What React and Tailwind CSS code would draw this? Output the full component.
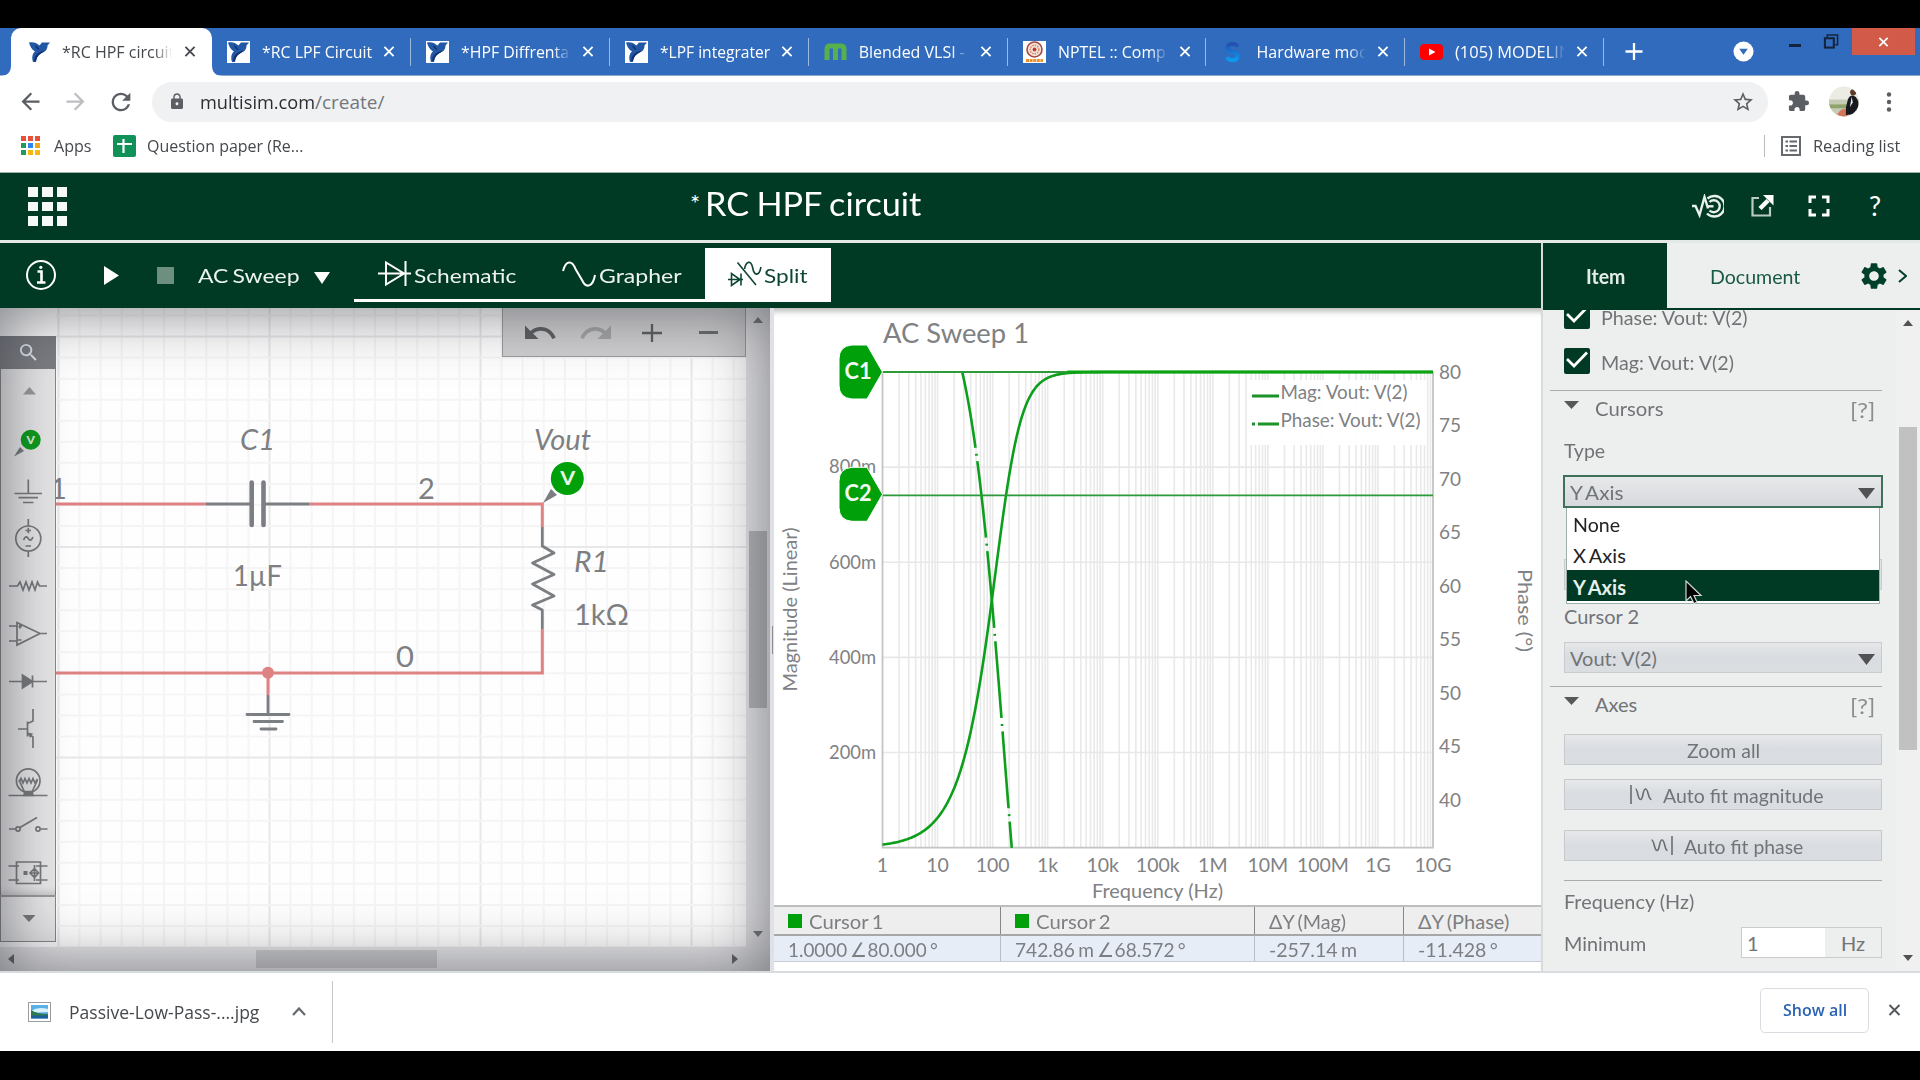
import React, { useLayoutEffect, useRef, useState } from "react";
import {
  MdArrowBack,
  MdArrowForward,
  MdRefresh,
  MdLock,
  MdStarBorder,
  MdExtension,
  MdSearch,
  MdSettings,
  MdUndo,
  MdRedo,
  MdFullscreen,
} from "react-icons/md";

/* Single line of text stretched or squeezed to a given width. */
function Fit({ w, children, className = "" }) {
  const ref = useRef(null);
  const [scale, setScale] = useState(1);
  useLayoutEffect(() => {
    if (ref.current.offsetWidth) setScale(w / ref.current.offsetWidth);
  }, [w]);
  return (
    <span className={"inline-block shrink-0 whitespace-nowrap " + className} style={{ width: w }}>
      <span ref={ref} className="inline-block origin-left" style={{ transform: `scaleX(${scale})` }}>
        {children}
      </span>
    </span>
  );
}

/* ---------- Browser chrome ---------- */

function NiBird({ boxed }) {
  return (
    <svg viewBox="0 0 23 22" className={boxed ? "h-[22px] w-[23px] bg-white" : "h-[22px] w-[23px]"}>
      <path d="M1 1.500 C5 .5 8.500 1.500 11.500 4.500 L14 1.500 H22 L19.500 4.500 C19.500 8.500 17.500 11 13 12 C9.500 13 9 17 8 21 H5 C3.500 16 4.500 12.500 7 10.500 C3.500 8.500 1.800 5 1 1.500 Z" fill="#2257a5" />
      <path d="M6 20 C6.500 14 10 11 16.500 9.500 C14 13 9.500 13 7.800 20 Z M7 4 C9 5 11 7 11.500 9 C9 8.500 7.500 6.500 7 4 Z" fill="#10316e" />
    </svg>
  );
}

function Favicon({ kind }) {
  if (kind === "ni") return <NiBird />;
  if (kind === "nibox") return <NiBird boxed />;
  if (kind === "m")
    return (
      <svg viewBox="0 0 23 22" className="h-[22px] w-[23px]">
        <path d="M3 19 V8 Q3 5 6 5 H17 Q20 5 20 8 V19 M11.500 5 V19" fill="none" stroke="#56b14c" strokeWidth="5" />
      </svg>
    );
  if (kind === "nptel")
    return (
      <svg viewBox="0 0 23 22" className="h-[22px] w-[23px] bg-white">
        <circle cx="11.500" cy="8.500" r="7.500" fill="#f3e3dc" stroke="#a7493a" strokeWidth="1.600" />
        <circle cx="11.500" cy="8.500" r="4.300" fill="none" stroke="#d58a6a" strokeWidth="1.500" strokeDasharray="1.500 1" />
        <circle cx="11.500" cy="8.500" r="1.900" fill="#c0392b" />
        <path d="M3 19.500 H20" stroke="#f0902b" strokeWidth="3" strokeDasharray="3 .6" />
      </svg>
    );
  if (kind === "s")
    return (
      <svg viewBox="0 0 23 22" className="h-[22px] w-[23px]">
        <defs>
          <linearGradient id="sg" x1="0" y1="0" x2="0" y2="1">
            <stop offset="0" stopColor="#2350b0" />
            <stop offset="1" stopColor="#0a9bf0" />
          </linearGradient>
        </defs>
        <path d="M16.500 6 Q15 3 11.500 3 Q6.500 3.300 6.500 7 Q6.800 10 11.500 11 Q16.800 12 16.500 15 Q16 19 11.500 19 Q7.500 19 6 16" fill="none" stroke="url(#sg)" strokeWidth="4.200" />
      </svg>
    );
  return (
    <svg viewBox="0 0 23 22" className="h-[22px] w-[23px]">
      <rect x="0" y="3" width="23" height="16" rx="4" fill="#f00" />
      <path d="M9 7.500 L15.500 11 L9 14.500 Z" fill="#fff" />
    </svg>
  );
}

function Cross({ className }) {
  return (
    <svg viewBox="0 0 12 12" className={"shrink-0 " + className}>
      <path d="M1 1 L11 11 M11 1 L1 11" stroke="currentColor" strokeWidth="2" fill="none" />
    </svg>
  );
}

const TABS = [
  { icon: "nibox", text: "*RC LPF Circuit", w: 110 },
  { icon: "nibox", text: "*HPF Diffrentai", w: 112, faded: true },
  { icon: "nibox", text: "*LPF integrater", w: 110 },
  { icon: "m", text: "Blended VLSI - ", w: 106, faded: true },
  { icon: "nptel", text: "NPTEL :: Comp", w: 108, faded: true },
  { icon: "s", text: "Hardware mod", w: 112, faded: true },
  { icon: "yt", text: "(105) MODELIN", w: 116, faded: true },
];

function TabLabel({ text, w, faded }) {
  return (
    <div
      className={
        faded
          ? "ml-3 w-[110px] shrink-0 overflow-hidden text-[16px] leading-[24px] [mask-image:linear-gradient(to_right,black_84%,transparent_100%)]"
          : "ml-3 w-[110px] shrink-0 text-[16px] leading-[24px]"
      }
    >
      <Fit w={w}>{text}</Fit>
    </div>
  );
}

function TabStrip() {
  return (
    <div className="flex h-[48px] shrink-0 items-stretch border-b border-[#8fa9c9] bg-[#316bbd] pl-[11px] text-white">
      <div className="relative -mb-px flex w-[201px] shrink-0 items-center rounded-t-[10px] bg-white pb-px pl-[17px] text-[#45484d]">
        <svg className="absolute bottom-0 -left-[11px] h-[11px] w-[11px]" viewBox="0 0 11 11">
          <path d="M11 0 V11 H0 Q11 11 11 0" fill="#fff" />
        </svg>
        <svg className="absolute -right-[11px] bottom-0 h-[11px] w-[11px]" viewBox="0 0 11 11">
          <path d="M0 0 V11 H11 Q0 11 0 0" fill="#fff" />
        </svg>
        <Favicon kind="ni" />
        <div className="-ml-[1px] flex">
          <TabLabel text="*RC HPF circuit" w={112} faded />
        </div>
        <Cross className="ml-[12px] h-[11px] w-[12px]" />
      </div>
      {TABS.map((t) => (
        <div key={t.text} className="flex w-[198.900px] shrink-0 items-center pl-[15px]">
          <Favicon kind={t.icon} />
          <TabLabel text={t.text} w={t.w} faded={t.faded} />
          <Cross className="ml-[11px] h-[11px] w-[12px]" />
          <div className="ml-auto h-[28px] w-px bg-[#9db9dd]" />
        </div>
      ))}
      <svg viewBox="0 0 18 18" className="ml-[21px] h-[17px] w-[18px] self-center">
        <path d="M9 0 V18 M0 9 H18" stroke="#fff" strokeWidth="2.400" />
      </svg>
      <svg viewBox="0 0 22 22" className="ml-[90px] h-[21px] w-[21px] self-center">
        <circle cx="11" cy="11" r="10.500" fill="#fff" />
        <path d="M6.500 8 H15.500 L11 14.500 Z" fill="#316bbd" />
      </svg>
      <div className="mt-[16px] ml-[35px] h-[3px] w-[12px] bg-[#14243c]" />
      <svg viewBox="0 0 16 16" className="mt-[6px] ml-[22px] h-[15px] w-[16px]">
        <path d="M4 3.500 V1 H15 V11.500 H12.500" fill="none" stroke="#14243c" strokeWidth="1.600" />
        <rect x="1.500" y="4.500" width="9.500" height="10" fill="none" stroke="#14243c" strokeWidth="2.200" />
      </svg>
      <div className="mr-[5px] ml-auto flex h-[27px] w-[63px] items-center justify-center bg-[#d15a48]">
        <Cross className="h-[10px] w-[11px]" />
      </div>
    </div>
  );
}

function AddressBar() {
  return (
    <div className="flex h-[51px] shrink-0 items-center bg-white pl-[17px] text-[#5b5e63]">
      <MdArrowBack className="h-[27px] w-[27px]" />
      <MdArrowForward className="ml-[18px] h-[27px] w-[27px] text-[#bcbec1]" />
      <MdRefresh className="ml-[18px] h-[28px] w-[28px]" />
      <div className="ml-[17px] flex h-[40px] w-[1616px] items-center rounded-full bg-[#eff1f3] pl-[16px]">
        <MdLock className="h-[19px] w-[18px]" />
        <div className="ml-[14px] flex text-[19px] leading-[26px]">
          <Fit w={115} className="text-[#2a2d31]">multisim.com</Fit>
          <Fit w={69} className="text-[#74777b]">/create/</Fit>
        </div>
        <MdStarBorder className="mr-[13px] ml-auto h-[24px] w-[24px]" />
      </div>
      <MdExtension className="ml-[19px] h-[23px] w-[23px]" />
      <svg viewBox="0 0 32 32" className="ml-[18px] h-[31px] w-[32px]">
        <defs>
          <clipPath id="av">
            <circle cx="16" cy="16" r="15.500" />
          </clipPath>
        </defs>
        <g clipPath="url(#av)">
          <rect width="32" height="32" fill="#ecece4" />
          <rect y="14" width="32" height="18" fill="#c6cbb6" />
          <rect y="19" width="20" height="4" fill="#8fa36a" />
          <path d="M8 32 Q12 22 18 24 L20 32 Z" fill="#d2765a" />
          <path d="M20 14 Q22 9 26 10 Q31 12 31 20 L29 29 L18 30 L18 22 Z" fill="#17191f" />
          <path d="M24 11 L25 17 L22 22 Z" fill="#f2f2f2" />
          <circle cx="25.500" cy="6.500" r="3.200" fill="#5d3b2b" />
        </g>
      </svg>
      <svg viewBox="0 0 6 20" className="ml-[26px] h-[20px] w-[6px]">
        <circle cx="3" cy="2.500" r="2.200" fill="#5b5e63" />
        <circle cx="3" cy="10" r="2.200" fill="#5b5e63" />
        <circle cx="3" cy="17.500" r="2.200" fill="#5b5e63" />
      </svg>
    </div>
  );
}

const APP_DOTS = ["#e8503a", "#e8503a", "#e8503a", "#23995a", "#2f85f0", "#f2a51c", "#23995a", "#f7b90f", "#f7b90f"];

function BookmarksBar() {
  return (
    <div className="flex h-[46px] shrink-0 items-start border-b border-[#9fb0a7] bg-white pl-[21px] text-[16.500px] leading-[24px] text-[#45484d]">
      <div className="mt-[9px] grid h-[19px] w-[19px] grid-cols-3 gap-[2px]">
        {APP_DOTS.map((c, i) => (
          <span key={i} style={{ backgroundColor: c }} />
        ))}
      </div>
      <div className="mt-[7px] ml-[14px]">
        <Fit w={38}>Apps</Fit>
      </div>
      <svg viewBox="0 0 23 22" className="mt-[8px] ml-[21px] h-[22px] w-[23px]">
        <rect width="23" height="22" rx="2" fill="#0f9158" />
        <path d="M4 9 H19 M10.500 4 V18" stroke="#fff" strokeWidth="2.200" />
      </svg>
      <div className="mt-[7px] ml-[11px]">
        <Fit w={156}>Question paper (Re...</Fit>
      </div>
      <div className="mt-[8px] ml-auto h-[22px] w-px bg-[#b9bbbe]" />
      <svg viewBox="0 0 20 20" className="mt-[9px] ml-[16px] h-[20px] w-[20px]">
        <rect x="1" y="1" width="18" height="18" fill="none" stroke="#66696e" strokeWidth="2" />
        <path d="M4.500 5.500 H7 M4.500 10 H7 M4.500 14.500 H7 M8.500 5.500 H16 M8.500 10 H16 M8.500 14.500 H16" stroke="#66696e" strokeWidth="2" />
      </svg>
      <div className="mt-[7px] mr-[20px] ml-[12px]">
        <Fit w={87}>Reading list</Fit>
      </div>
    </div>
  );
}

/* ---------- Multisim header ---------- */

function AppHeader() {
  return (
    <header className="flex h-[67px] shrink-0 items-start bg-[#003a24] text-white">
      <div className="mt-[14px] ml-[28px] grid h-[39px] w-[39px] grid-cols-3 gap-x-[4px] gap-y-[5px]">
        {Array.from({ length: 9 }, (_, i) => (
          <span key={i} className="bg-[#f7f9f8]" />
        ))}
      </div>
      <div className="mt-[11px] ml-[623px] flex items-start [word-spacing:-0.08em]">
        <span className="mt-[3px] w-[15px] text-[24px] leading-[32px]">*</span>
        <Fit w={216} className="text-[32px] leading-[40px]">RC HPF circuit</Fit>
      </div>
      <div className="mt-[20px] ml-auto flex h-[26px] items-center pr-[35px]">
        <svg viewBox="0 0 32 24" className="h-[24px] w-[32px]" fill="none" stroke="#e9f0ec" strokeWidth="2.400">
          <path d="M0 12 H3.500 L7.500 21 L12.500 3 L16 14.500" />
          <path d="M15.500 4.500 A10.300 10.300 0 1 1 15 19.500" />
          <path d="M17.500 8 A6 6 0 1 1 17.500 16.500" />
          <path d="M16 12.300 H21.500" />
        </svg>
        <svg viewBox="0 0 23 22" className="ml-[27px] h-[22px] w-[23px]" fill="none" stroke="#b9cbc2" strokeWidth="2.200">
          <path d="M8 3 H1.500 V20.500 H19 V12" />
          <path d="M9 13.500 L17 5.500" stroke="#fff" strokeWidth="4.500" />
          <path d="M12 0 H22.500 V10.500 Z" fill="#fff" stroke="none" />
        </svg>
        <MdFullscreen className="ml-[27px] h-[36px] w-[36px]" />
        <span className="ml-[28px] w-[20px] text-center text-[27px] leading-[26px]">?</span>
      </div>
    </header>
  );
}

function ViewToolbar() {
  return (
    <div className="flex h-[65px] w-[1541px] shrink-0 items-start bg-[#003a24] text-[20px] leading-[26px] text-[#edf3f0]">
      <svg viewBox="0 0 32 32" className="mt-[16px] ml-[25px] h-[32px] w-[32px]" fill="none" stroke="#fff" strokeWidth="2">
        <circle cx="16" cy="16" r="14" />
        <path d="M12.500 12.500 H16.500 V23 M12 23.500 H20.500" strokeWidth="2.600" />
        <circle cx="15.800" cy="8.300" r="1.600" fill="#fff" stroke="none" />
      </svg>
      <svg viewBox="0 0 15 19" className="mt-[23px] ml-[47px] h-[19px] w-[15px]">
        <path d="M0 0 L15 9.500 L0 19 Z" fill="#fff" />
      </svg>
      <div className="mt-[24px] ml-[38px] h-[17px] w-[17px] bg-[#6d8f80]" />
      <div className="mt-[19px] ml-[24px] [word-spacing:-0.08em]">
        <Fit w={101}>AC Sweep</Fit>
      </div>
      <svg viewBox="0 0 16 12" className="mt-[29px] ml-[15px] h-[12px] w-[16px]">
        <path d="M0 0 H16 L8 12 Z" fill="#fff" />
      </svg>
      <div className="ml-[24px] flex h-[59px] pt-[5px]">
        <div className="flex w-[186px] items-center border-b-[3px] border-white pl-[24px]">
          <svg viewBox="0 0 33 26" className="h-[26px] w-[33px]" fill="none" stroke="#fff" strokeWidth="2">
            <path d="M0 12.500 H33 M8 1.500 V23.500 L26 12.500 Z M27.500 0 V25" />
          </svg>
          <Fit w={102} className="mt-[2px] ml-[3px]">Schematic</Fit>
        </div>
        <div className="flex w-[165px] items-center border-b-[3px] border-white pl-[22px]">
          <svg viewBox="0 0 34 26" className="h-[26px] w-[34px]" fill="none" stroke="#fff" strokeWidth="2">
            <path d="M1 10 C4 -1 10 -1 13.500 8 L20 19 C24 28 31 26 33 14" />
          </svg>
          <Fit w={83} className="mt-[2px] ml-[3px]">Grapher</Fit>
        </div>
        <div className="flex w-[126px] items-center bg-white pl-[23px] text-[#0f4631]">
          <svg viewBox="0 0 34 26" className="-mt-[2px] h-[26px] w-[34px]" fill="none" stroke="#0f4631" strokeWidth="1.600">
            <path d="M0 18.500 H15 M3.500 12.500 V24.500 L12 18.500 Z M13 12.500 V24.500 M9.500 1.500 L28 24" />
            <path d="M16.500 8 C18 0 23 -1 24.500 6 C26 15 31 16 33 6" />
          </svg>
          <Fit w={44} className="ml-[2px]">Split</Fit>
        </div>
      </div>
    </div>
  );
}

/* ---------- Schematic ---------- */

const MINOR_X = Array.from({ length: 33 }, (_, i) => 58.5 + i * 21.1);
const MINOR_Y = Array.from({ length: 32 }, (_, i) => 7.5 + i * 21.05);

function Schematic() {
  const major = (i, off) => (i + off) % 10 === 0;
  return (
    <svg viewBox="0 0 746 639" className="h-[639px] w-[746px]" fill="none">
      {MINOR_X.map((x, i) => (
        <path key={i} d={`M${x} 0 V639`} stroke={major(i, 0) ? "#e7e8ea" : "#f5f5f6"} strokeWidth="2" />
      ))}
      {MINOR_Y.map((y, i) => (
        <path key={i} d={`M56 ${y} H746`} stroke={major(i, 9) ? "#e7e8ea" : "#f5f5f6"} strokeWidth="2" />
      ))}
      <g stroke="#df8283" strokeWidth="3">
        <path d="M56 196 H206 M309 196 H542.300 V219 M542.300 321 V365 H56 M268 365 V387" />
        <circle cx="268" cy="364.700" r="6" fill="#df8283" stroke="none" />
      </g>
      <g stroke="#7b7e82" strokeWidth="2.800" strokeLinecap="round" strokeLinejoin="round">
        <path d="M206 196 H251 M264 196 H309" strokeLinecap="butt" />
        <path d="M251.700 174.500 V217 M263.500 174.500 V217" strokeWidth="4.600" />
        <path d="M542.300 219 V238 L554 245 L532.500 255 L554 266.500 L532.500 276 L554 288 L532.500 297 L542.300 302 V321" strokeLinecap="butt" />
        <path d="M268 387 V406" strokeLinecap="butt" />
        <path d="M247 406.500 H289 M254 413.500 H282.500 M261 421 H276" />
      </g>
      <path d="M543 195 L551 181 L557 187 Z" fill="#7b7e82" />
      <circle cx="567.300" cy="170.500" r="16.500" fill="#00a00a" />
      <g fontFamily="Lato, sans-serif" fill="#7d7f83" fontSize="29">
        <text x="560.300" y="176.500" fontSize="19" fontWeight="700" fill="#e8f7e8" textLength="15" lengthAdjust="spacingAndGlyphs">V</text>
        <text x="240" y="141.500" fontStyle="italic" textLength="35" lengthAdjust="spacingAndGlyphs">C1</text>
        <text x="233" y="278" textLength="49" lengthAdjust="spacingAndGlyphs">1µF</text>
        <text x="418" y="190.500">2</text>
        <text x="534" y="141.500" fontStyle="italic" textLength="57" lengthAdjust="spacingAndGlyphs">Vout</text>
        <text x="574" y="263.500" fontStyle="italic" textLength="35" lengthAdjust="spacingAndGlyphs">R1</text>
        <text x="574" y="317" textLength="55" lengthAdjust="spacingAndGlyphs">1kΩ</text>
        <text x="396" y="359" textLength="18" lengthAdjust="spacingAndGlyphs">0</text>
        <text x="50" y="190.500">1</text>
      </g>
    </svg>
  );
}

function PaletteIcon({ h, children }) {
  return (
    <svg viewBox={`0 0 56 ${h}`} className="w-[56px] shrink-0" height={h} fill="none" stroke="#77797c" strokeWidth="1.700">
      {children}
    </svg>
  );
}

function Palette() {
  return (
    <div className="absolute top-[28px] left-0 flex h-[606px] w-[56px] flex-col">
      <div className="flex h-[33px] shrink-0 items-center justify-center bg-[#7c7e83]">
        <MdSearch className="h-[23px] w-[23px] text-[#e6eaf5]" />
      </div>
      <div className="flex grow flex-col border-x-[1.500px] border-b-[1.500px] border-[#85878a] bg-[#e7e7e8]">
        <div className="-ml-[1.500px] flex h-[528px] w-[56px] flex-col border-b-2 border-[#98999c] shadow-[inset_0_-9px_6px_-6px_rgba(0,0,0,0.15)]">
          {/* scroll up */}
          <PaletteIcon h={46}>
            <path d="M23 25.500 L29.500 18 L36 25.500 Z" fill="#97999b" stroke="none" />
          </PaletteIcon>
          {/* voltage probe */}
          <PaletteIcon h={50}>
            <path d="M14 41.500 L20 32 L24 36 Z" fill="#77797c" stroke="none" />
            <circle cx="30.700" cy="24.700" r="10" fill="#0c9c1c" stroke="none" />
            <text x="26.400" y="28.500" fontFamily="Lato, sans-serif" fontSize="12" fontWeight="900" fill="#d9f0d9" stroke="none">V</text>
          </PaletteIcon>
          {/* ground */}
          <PaletteIcon h={50}>
            <path d="M28.300 14.500 V28 M14.500 28.500 H42 M18.500 32.700 H38 M23 37.500 H33.500" />
          </PaletteIcon>
          {/* source */}
          <PaletteIcon h={48}>
            <circle cx="28.300" cy="23.500" r="12.500" />
            <path d="M28.300 4 V11 M28.300 36 V42 M25.500 15.500 H31 M28.300 12.700 V18.200 M25.500 31 H31 M23.500 25 Q26 19.500 28.300 23.500 T33 22" />
          </PaletteIcon>
          {/* resistor */}
          <PaletteIcon h={48}>
            <path d="M9 23 H17.500 L20 19 L23 27 L26 19 L29 27 L32 19 L35 27 L37.500 19 L39.500 23 H47" />
          </PaletteIcon>
          {/* op amp */}
          <PaletteIcon h={46}>
            <path d="M17 11.500 V34 L40 22.500 Z M9 15 H17 M9 30 H17 M40 22.500 H47 M18.500 15.500 H22 M20 13.500 V17.500 M18 29 H21.500" />
          </PaletteIcon>
          {/* diode */}
          <PaletteIcon h={48}>
            <path d="M9 24.500 H47 M32.500 18.500 V30.500" />
            <path d="M22.500 18 V31 L32.500 24.500 Z" fill="#77797c" />
          </PaletteIcon>
          {/* transistor */}
          <PaletteIcon h={46}>
            <path d="M33 4 V16 L27.500 18.500 M27.500 16.500 V31.500 M18 24 H27.500 M27.500 28.500 L33 32 V43" />
            <path d="M27.500 27.500 L33 28.500 L30 33 Z" fill="#77797c" stroke="none" />
          </PaletteIcon>
          {/* lamp */}
          <PaletteIcon h={50}>
            <circle cx="28.200" cy="29.700" r="11.800" />
            <path d="M8.500 44.500 H47.500 M19 29 L24.500 41 M37.500 29 L32 41 M19 31 L21 27.500 L23 32 L25 27.500 L27 32 L29 27.500 L31 32 L33 27.500 L35 32 L37.500 28" />
            <path d="M25 40.500 H32 L33 44.500 H24 Z" fill="#77797c" />
          </PaletteIcon>
          {/* switch */}
          <PaletteIcon h={50}>
            <path d="M9 28 H15.500 M40.500 28 H47.500 M20 26.500 L37 16.500" />
            <circle cx="18" cy="28" r="2.100" />
            <circle cx="38" cy="28" r="2.100" />
          </PaletteIcon>
          {/* controlled source block */}
          <PaletteIcon h={44}>
            <path d="M16.500 11 H40.500 V32.500 H16.500 Z M8.500 15 H19 M8.500 29 H19 M36 15 H47.500 M36 29 H47.500 M34.500 14 V30 M30 22 H39 M34.500 17.500 L38.500 22 L34.500 26.500 L30 22 Z" />
            <path d="M23.500 20 H27.500 V24 H23.500 Z" fill="#77797c" stroke="none" />
          </PaletteIcon>
        </div>
        <svg viewBox="0 0 53 43" className="h-[43px] w-[53px]">
          <path d="M21.500 18 H34.500 L28 25 Z" fill="#77797c" />
        </svg>
      </div>
    </div>
  );
}

function SchematicPane() {
  return (
    <section className="relative flex h-[663px] w-[770px] shrink-0 flex-col overflow-hidden bg-[#fefefe]">
      <div className="flex h-[639px]">
        <Schematic />
        <div className="flex w-[24px] flex-col items-center bg-[#e6e6e8]">
          <svg viewBox="0 0 10 6" className="mt-[9px] h-[6px] w-[10px]">
            <path d="M0 6 L5 0 L10 6 Z" fill="#77797c" />
          </svg>
          <div className="mt-[208px] h-[177px] w-[18px] bg-[#b4b5b7]" />
          <svg viewBox="0 0 10 6" className="mt-[223px] h-[6px] w-[10px]">
            <path d="M0 0 L5 6 L10 0 Z" fill="#77797c" />
          </svg>
        </div>
      </div>
      <div className="flex h-[24px] items-center bg-[#e6e6e8] pl-[8px]">
        <svg viewBox="0 0 6 10" className="h-[10px] w-[6px]">
          <path d="M6 0 L0 5 L6 10 Z" fill="#66686b" />
        </svg>
        <div className="ml-[242px] h-[18px] w-[181px] bg-[#c9c9cb]" />
        <svg viewBox="0 0 6 10" className="ml-[295px] h-[10px] w-[6px]">
          <path d="M0 0 L6 5 L0 10 Z" fill="#66686b" />
        </svg>
      </div>
      <Palette />
      <div className="absolute top-0 left-[502px] flex h-[49px] w-[244px] items-center border-[1.500px] border-t-0 border-[#9b9c9f] bg-[#cfcfd0] pt-[1px] pl-[19px] text-[#5d5f61]">
        <MdUndo className="h-[36px] w-[36px]" />
        <MdRedo className="ml-[20px] h-[36px] w-[36px] text-[#a3a5a7]" />
        <svg viewBox="0 0 20 20" className="ml-[28px] h-[20px] w-[20px]">
          <path d="M10 1 V19 M0 10 H20" stroke="currentColor" strokeWidth="2.300" />
        </svg>
        <div className="ml-[37px] h-[3px] w-[19px] bg-[#6b6d70]" />
      </div>
      {/* vignette over the whole pane */}
      <div className="pointer-events-none absolute inset-0 shadow-[inset_0_0_66px_rgba(38,40,50,0.62)]" />
    </section>
  );
}

/* ---------- Grapher ---------- */

const PX = 882.5 - 774;
const PY = 372 - 308;
const PW = 550.5;
const PH = 475.6;
const FC = 159.15;
const dec = PW / 10;

function curve(y, from, to) {
  const n = Math.ceil((to - from) / 0.02);
  const pts = Array.from({ length: n + 1 }, (_, i) => {
    const d = from + ((to - from) * i) / n;
    return `${(PX + d * dec).toFixed(2)} ${y(Math.pow(10, d)).toFixed(2)}`;
  });
  return "M" + pts.join(" L");
}

const MAG = curve((f) => PY + PH * (1 - f / FC / Math.sqrt(1 + (f / FC) ** 2)), 0, 10);
const PHASE = curve((f) => PY + (80 - (Math.atan(FC / f) * 180) / Math.PI) * 10.7, 1.448, 2.348);
const X_LABELS = ["1", "10", "100", "1k", "10k", "100k", "1M", "10M", "100M", "1G", "10G"];

function Badge({ y, label }) {
  return (
    <g transform={`translate(65 ${y - 27})`}>
      <path d="M13 0 H28 L43.500 27 L28 54 H13 Q0 53 0 40 V14 Q0 1 13 0 Z" fill="#00a00a" stroke="#fff" strokeWidth="1" />
      <text x="5.500" y="34" fontSize="22" fontWeight="700" fill="#f1faf1" textLength="27" lengthAdjust="spacingAndGlyphs">
        {label}
      </text>
    </g>
  );
}

function Chart() {
  const lines = [];
  for (let d = 0; d < 10; d++)
    for (let m = 1; m < 10; m++) {
      if (d === 0 && m === 1) continue;
      lines.push(PX + (d + Math.log10(m)) * dec);
    }
  return (
    <svg viewBox="0 0 767 597" className="h-[597px] w-[767px] shrink-0" fill="none" fontFamily="Lato, sans-serif">
      {lines.map((x) => (
        <path key={x} d={`M${x} ${PY} V${PY + PH}`} stroke="#e9e9e9" strokeWidth="1.600" />
      ))}
      {[1, 2, 3, 4].map((i) => (
        <path key={i} d={`M${PX} ${PY + (PH / 5) * i} H${PX + PW}`} stroke="#e8e8e8" strokeWidth="1.600" />
      ))}
      <path d={`M${PX} ${PY} V${PY + PH} H${PX + PW} V${PY}`} stroke="#c3c4c5" strokeWidth="1.800" />
      <g fill="#808184" fontSize="20">
        <text x="109" y="34.500" fontSize="26" textLength="146" lengthAdjust="spacingAndGlyphs">AC Sweep 1</text>
        {["800m", "600m", "400m", "200m"].map((t, i) => (
          <text key={t} x="55" y={PY + 6.3 + (PH / 5) * (i + 1)} textLength="47" lengthAdjust="spacingAndGlyphs">{t}</text>
        ))}
        {Array.from({ length: 9 }, (_, i) => (
          <text key={i} x="665" y={PY + 6.5 + 53.5 * i} textLength="22" lengthAdjust="spacingAndGlyphs">{80 - 5 * i}</text>
        ))}
        {X_LABELS.map((t, i) => (
          <text key={t} x={PX + i * dec} y="563.500" textAnchor="middle" fontSize="19.500">{t}</text>
        ))}
        <text x="318" y="589.500" textLength="131" lengthAdjust="spacingAndGlyphs">Frequency (Hz)</text>
        <text transform="translate(23 383.500) rotate(-90)" fontSize="19" textLength="164" lengthAdjust="spacingAndGlyphs">Magnitude (Linear)</text>
        <text transform="translate(744 261) rotate(90)" fontSize="19" textLength="83" lengthAdjust="spacingAndGlyphs">Phase (°)</text>
      </g>
      <path d={MAG} stroke="#0d9f1c" strokeWidth="2.600" />
      <path d={PHASE} stroke="#0d9f1c" strokeWidth="2.600" strokeDasharray="77 6 2 5.500" />
      <path d={`M${PX} ${PY} H${PX + PW}`} stroke="#2f9a3a" strokeWidth="1.800" />
      <path d={`M${PX + 185} ${PY} H${PX + PW}`} stroke="#0ba312" strokeWidth="2.800" />
      <path d={`M${PX} 187.300 H${PX + PW}`} stroke="#2a9a3a" strokeWidth="1.800" />
      <rect x="474" y="72" width="179" height="65" fill="#fff" fillOpacity=".94" />
      <g stroke="#1c922b" strokeWidth="3">
        <path d="M478 88 H505 M484 116 H505 M478 116 H481" />
      </g>
      <g fill="#808184" fontSize="20">
        <text x="506.500" y="91" textLength="127" lengthAdjust="spacingAndGlyphs">Mag: Vout: V(2)</text>
        <text x="506.500" y="119" textLength="140" lengthAdjust="spacingAndGlyphs">Phase: Vout: V(2)</text>
      </g>
      <Badge y={PY} label="C1" />
      <Badge y={186.3} label="C2" />
    </svg>
  );
}

const READOUT = [
  { head: "Cursor 1", hw: 75, value: "1.0000 ∠80.000 °", vw: 150, dot: true },
  { head: "Cursor 2", hw: 75, value: "742.86 m ∠68.572 °", vw: 171, dot: true },
  { head: "ΔY (Mag)", hw: 77, value: "-257.14 m", vw: 88 },
  { head: "ΔY (Phase)", hw: 91, value: "-11.428 °", vw: 80 },
];

function Readout() {
  return (
    <div className="border-t-2 border-[#bdbebe] text-[20px] text-[#7c7e82] [word-spacing:-0.08em]">
      <div className="grid h-[29px] grid-cols-[227px_254px_149px_1fr] border-b-2 border-[#a6a7a9] bg-[#eeeeee]">
        {READOUT.map((c, i) => (
          <div key={c.head} className={"flex items-center pl-[14px] leading-[24px]" + (i < 3 ? " border-r border-[#85878a]" : "")}>
            {c.dot && <span className="mr-[7px] h-[14px] w-[14px] bg-[#00a00a]" />}
            <Fit w={c.hw}>{c.head}</Fit>
          </div>
        ))}
      </div>
      <div className="grid h-[26px] grid-cols-[227px_254px_149px_1fr] border-b border-[#c9cdd3] bg-[#e7edf7]">
        {READOUT.map((c, i) => (
          <div key={c.value} className={"flex items-center pl-[14px] leading-[22px]" + (i < 3 ? " border-r border-[#b9bcc2]" : "")}>
            <Fit w={c.vw}>{c.value}</Fit>
          </div>
        ))}
      </div>
    </div>
  );
}

/* ---------- Property panel ---------- */

function CheckRow({ label, w }) {
  return (
    <div className="flex h-[26px] items-center">
      <span className="flex h-[26px] w-[26px] items-center justify-center rounded-[2px] bg-[#003a24]">
        <svg viewBox="0 0 24 20" className="h-[20px] w-[24px]">
          <path d="M2 8 L9 15 L22 1.500" fill="none" stroke="#fff" strokeWidth="2.800" />
        </svg>
      </span>
      <Fit w={w} className="mt-[2px] ml-[11px]">{label}</Fit>
    </div>
  );
}

function SectionHead({ label, w }) {
  return (
    <div className="-ml-[14px] flex h-[35px] shrink-0 items-center border-t-[1.500px] border-[#a9abac] pr-[7px] pl-[14px]">
      <svg viewBox="0 0 15 8" className="mb-[7px] h-[8px] w-[15px]">
        <path d="M0 0 H15 L7.500 8 Z" fill="#56585a" />
      </svg>
      <Fit w={w} className="ml-[16px]">{label}</Fit>
      <Fit w={25} className="mt-[3px] ml-auto text-[22px] text-[#8a8c8e]">[?]</Fit>
    </div>
  );
}

function SelectBox({ label, w, active }) {
  return (
    <div
      className={
        active
          ? "-mx-[1px] flex h-[33px] shrink-0 items-center border-2 border-[#3d7159] bg-linear-to-b from-[#e7e8ea] to-[#d6d9dd] pr-[6px] pl-[5px] [word-spacing:-0.08em]"
          : "flex h-[31px] shrink-0 items-center border border-[#c9cbce] bg-linear-to-b from-[#e5e7e9] via-[#d9dce0] to-[#dbdee1] pr-[6px] pl-[5px]"
      }
    >
      {label && <Fit w={w} className="mt-[1px]">{label}</Fit>}
      <svg viewBox="0 0 17 11" className="mt-[4px] ml-auto h-[11px] w-[17px]">
        <path d="M0 0 H17 L8.500 11 Z" fill="#505254" />
      </svg>
    </div>
  );
}

function PanelButton({ children }) {
  return (
    <div className="flex h-[31px] shrink-0 items-center justify-center border border-[#c6c9cc] bg-linear-to-b from-[#e6e8ea] via-[#d9dce0] to-[#dadde1]">
      {children}
    </div>
  );
}

function Panel() {
  return (
    <aside className="flex h-[728px] w-[377px] shrink-0 flex-col bg-[#edeeee] text-[20px] leading-[24px] text-[#717477]">
      <div className="flex h-[67px] shrink-0 border-b-2 border-[#003a24]">
        <div className="-mb-[2px] flex w-[124px] items-center justify-center bg-[#003a24] font-bold text-[#e4ece8]">
          <Fit w={39} className="-mt-[1px]">Item</Fit>
        </div>
        <div className="flex grow items-center pl-[43px] text-[#1b5a42]">
          <Fit w={90} className="mt-[1px]">Document</Fit>
          <MdSettings className="ml-[58px] h-[32px] w-[32px] text-[#00402a]" />
          <svg viewBox="0 0 9 14" className="ml-[8px] h-[14px] w-[9px]">
            <path d="M1 1 L8 7 L1 13" fill="none" stroke="#00402a" strokeWidth="2" />
          </svg>
        </div>
      </div>
      <div className="flex h-[661px] overflow-hidden">
        <div className="-mt-[7px] ml-[21px] flex w-[318px] flex-col">
          <CheckRow label="Phase: Vout: V(2)" w={147} />
          <div className="h-[19px] shrink-0" />
          <CheckRow label="Mag: Vout: V(2)" w={133} />
          <div className="h-[16px] shrink-0" />
          <SectionHead label="Cursors" w={68} />
          <div className="flex h-[50px] shrink-0 items-center pb-[1px]">
            <Fit w={41}>Type</Fit>
          </div>
          <div className="relative">
            <SelectBox label="Y Axis" w={54} active />
            <div className="absolute top-[33px] left-[2px] z-10 w-[314px] border border-t-0 border-[#9db1a8] bg-white pb-[2px] text-[#222] [word-spacing:-0.08em]">
              <div className="flex h-[31px] items-center pt-[1px] pl-[6px]">
                <Fit w={47}>None</Fit>
              </div>
              <div className="flex h-[31px] items-center pt-[1px] pl-[6px]">
                <Fit w={53}>X Axis</Fit>
              </div>
              <div className="relative flex h-[31px] items-center bg-[#003a24] pt-[2px] pl-[6px] font-bold text-[#e8f0ec]">
                <Fit w={53}>Y Axis</Fit>
                <svg viewBox="0 0 18 25" className="absolute top-[10px] left-[118px] h-[25px] w-[18px]">
                  <path d="M1 1 V21 L5.500 16.500 L9 23.500 L12 22 L9 15.500 H16 Z" fill="#000" stroke="#cfd8d4" strokeWidth="1.200" />
                </svg>
              </div>
            </div>
          </div>
          <div className="h-[51px] shrink-0" />
          <SelectBox />
          <div className="flex h-[52px] shrink-0 items-center">
            <Fit w={75}>Cursor 2</Fit>
          </div>
          <SelectBox label="Vout: V(2)" w={87} />
          <div className="h-[13px] shrink-0" />
          <SectionHead label="Axes" w={42} />
          <div className="h-[13px] shrink-0" />
          <PanelButton>
            <Fit w={73}>Zoom all</Fit>
          </PanelButton>
          <div className="h-[14px] shrink-0" />
          <PanelButton>
            <svg viewBox="0 0 22 19" className="ml-[7px] h-[19px] w-[22px]" fill="none" stroke="#6b6e71" strokeWidth="1.600">
              <path d="M1 0 V19 M5.500 4 C8 4 7.500 14.500 10.500 14.500 C13.500 14.500 12.500 4 15.500 4 C18.500 4 18 14.500 21.500 14.500" />
            </svg>
            <Fit w={161} className="ml-[11px]">Auto fit magnitude</Fit>
          </PanelButton>
          <div className="h-[20px] shrink-0" />
          <PanelButton>
            <svg viewBox="0 0 22 19" className="ml-[7px] h-[19px] w-[22px]" fill="none" stroke="#6b6e71" strokeWidth="1.600">
              <path d="M21 0 V19 M0.500 4 C3.500 4 3 14.500 6 14.500 C9 14.500 8 4 11 4 C14 4 13.500 14.500 16.500 14.500" />
            </svg>
            <Fit w={119} className="ml-[11px]">Auto fit phase</Fit>
          </PanelButton>
          <div className="mt-[19px] flex h-[40px] shrink-0 items-center border-t-[1.500px] border-[#a9abac] pt-[1px]">
            <Fit w={130}>Frequency (Hz)</Fit>
          </div>
          <div className="mt-[7px] flex h-[31px] shrink-0 items-center">
            <Fit w={82}>Minimum</Fit>
            <div className="ml-auto flex h-[31px] w-[141px] items-stretch border border-[#c9cbce]">
              <div className="flex w-[83px] items-center bg-white pl-[5px]">
                <span>1</span>
              </div>
              <div className="flex grow items-center justify-center">
                <Fit w={24}>Hz</Fit>
              </div>
            </div>
          </div>
        </div>
        <div className="ml-auto flex w-[24px] flex-col items-center bg-[#f0f0f0]">
          <svg viewBox="0 0 10 6" className="mt-[10px] h-[6px] w-[10px]">
            <path d="M0 6 L5 0 L10 6 Z" fill="#505254" />
          </svg>
          <div className="mt-[101px] h-[323px] w-[18px] bg-[#c1c1c1]" />
          <svg viewBox="0 0 10 6" className="mt-[205px] h-[6px] w-[10px]">
            <path d="M0 0 L5 6 L10 0 Z" fill="#505254" />
          </svg>
        </div>
      </div>
    </aside>
  );
}

/* ---------- Download shelf ---------- */

function DownloadShelf() {
  return (
    <div className="flex h-[80px] shrink-0 items-start border-t-2 border-[#d9dcdf] bg-white text-[#45484d]">
      <svg viewBox="0 0 23 20" className="mt-[29px] ml-[28px] h-[20px] w-[23px]">
        <rect x=".5" y=".5" width="22" height="19" fill="#fff" stroke="#9a9c9e" />
        <rect x="3" y="3" width="17" height="13.500" fill="#58b0e6" />
        <path d="M3 9 Q10 4 20 7 V10 L3 11 Z" fill="#d9f0fb" />
        <path d="M3 8 Q9 12 20 12 V14 H3 Z" fill="#2f7a52" />
        <path d="M3 13.500 H20 V16.500 H3 Z" fill="#1d5f9c" />
      </svg>
      <div className="mt-[26px] ml-[18px] text-[18px] leading-[26px]">
        <Fit w={190}>Passive-Low-Pass-....jpg</Fit>
      </div>
      <svg viewBox="0 0 14 9" className="mt-[34px] ml-[33px] h-[9px] w-[14px]">
        <path d="M1 8 L7 1.500 L13 8" fill="none" stroke="#66696d" strokeWidth="2.200" />
      </svg>
      <div className="mt-[8px] ml-[26px] h-[62px] w-px bg-[#c4c6c8]" />
      <div className="mt-[15px] ml-auto flex h-[45px] w-[109px] items-center justify-center rounded-[5px] border border-[#d9dce0] text-[16.500px] font-semibold text-[#2b63b4]">
        <Fit w={64}>Show all</Fit>
      </div>
      <Cross className="mt-[31px] mr-[19px] ml-[19px] h-[12px] w-[13px] text-[#55585c]" />
    </div>
  );
}

export default function App() {
  return (
    <div className="flex h-[1080px] w-[1920px] flex-col overflow-hidden bg-black pt-[28px] font-['Lato',sans-serif]">
      <div className="flex flex-col font-['Open_Sans','Noto_Sans',sans-serif]">
        <TabStrip />
        <AddressBar />
        <BookmarksBar />
      </div>
      <AppHeader />
      <div className="flex h-[731px] shrink-0 border-t-[3px] border-[#e3e9e6] bg-white">
        <div className="flex w-[1541px] shrink-0 flex-col">
          <ViewToolbar />
          <div className="flex h-[663px]">
            <SchematicPane />
            <div className="flex w-[4px] shrink-0 items-center bg-[#dfe1e7]">
              <div className="ml-[2px] h-[28px] w-px bg-[#8b8d90]" />
            </div>
            <section className="flex w-[767px] flex-col bg-white shadow-[inset_0_8px_6px_-5px_rgba(0,0,0,0.3)]">
              <Chart />
              <Readout />
            </section>
          </div>
        </div>
        <div className="w-[2px] shrink-0 bg-[#d5dcd9]" />
        <Panel />
      </div>
      <div className="font-['Open_Sans','Noto_Sans',sans-serif]">
        <DownloadShelf />
      </div>
    </div>
  );
}
